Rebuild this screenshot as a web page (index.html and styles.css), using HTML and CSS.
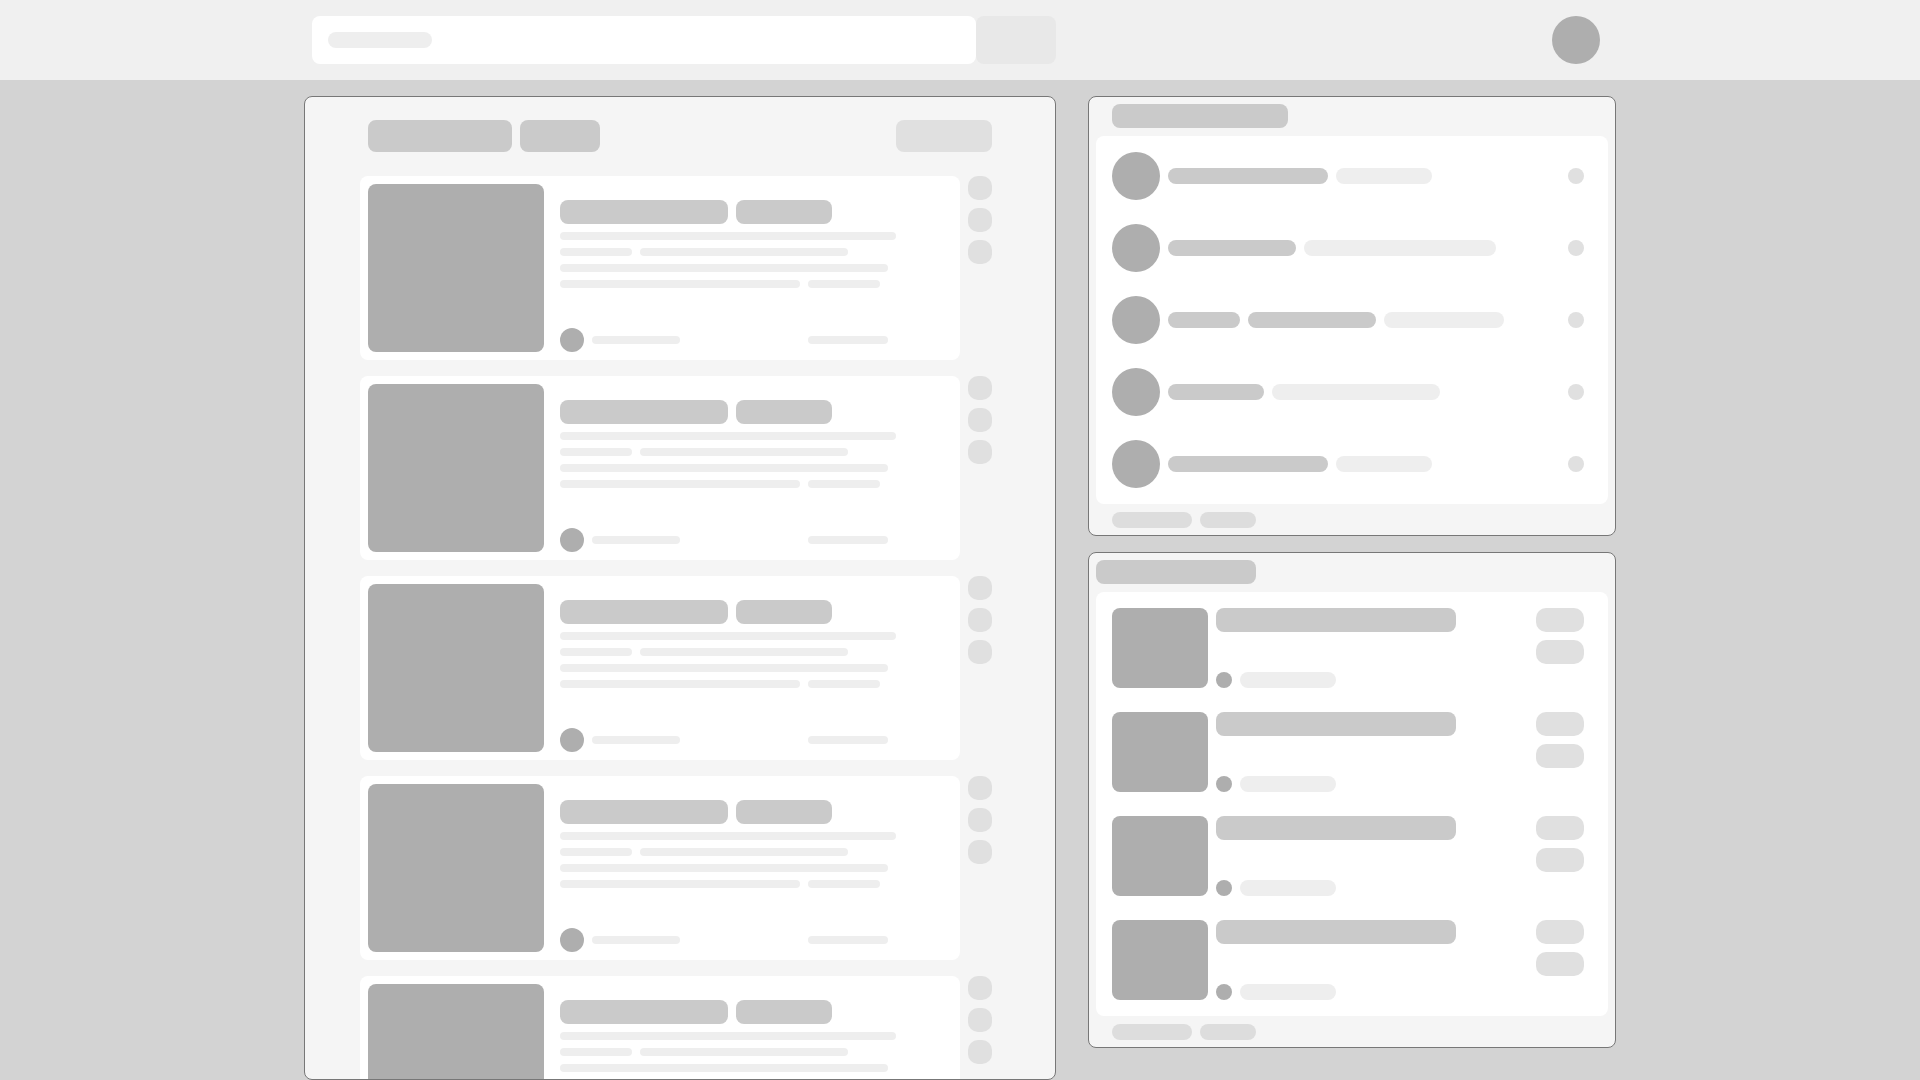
FILE: index.html
```html
<!DOCTYPE html>
<html lang="en">

<head>
    <meta charset="UTF-8">
    <meta name="viewport" content="width=device-width, initial-scale=1.0">
    <title>Document</title>
    <link rel="stylesheet" href="styles.css">
</head>

<body>
    <div class="topbar">
        <div class="topbar-inner">
            <div class="search">
                <span class="search-ph"></span>
            </div>
            <div class="search-btn"></div>
            <div class="avatar"></div>
        </div>
    </div>

    <div class="page">
        <!-- 左边：列表 -->
        <div class="feed">
            <div class="feed-head">
                <span class="pill w144"></span>
                <span class="pill w80"></span>
                <span class="pill light w96 push"></span>
            </div>

            <div class="feed-item">
                <div class="card">
                    <div class="thumb"></div>
                    <div class="info">
                        <div class="tags"><span class="tag w168"></span><span class="tag w96"></span></div>
                        <div class="line"><span class="w336"></span></div>
                        <div class="line"><span class="w72"></span><span class="w208"></span></div>
                        <div class="line"><span class="w328"></span></div>
                        <div class="line"><span class="w240"></span><span class="w72"></span></div>
                        <div class="info-foot">
                            <span class="dot"></span><span class="meta w88"></span>
                            <span class="meta w80 push"></span>
                        </div>
                    </div>
                </div>
                <div class="actions"><span></span><span></span><span></span></div>
            </div>

            <div class="feed-item">
                <div class="card">
                    <div class="thumb"></div>
                    <div class="info">
                        <div class="tags"><span class="tag w168"></span><span class="tag w96"></span></div>
                        <div class="line"><span class="w336"></span></div>
                        <div class="line"><span class="w72"></span><span class="w208"></span></div>
                        <div class="line"><span class="w328"></span></div>
                        <div class="line"><span class="w240"></span><span class="w72"></span></div>
                        <div class="info-foot">
                            <span class="dot"></span><span class="meta w88"></span>
                            <span class="meta w80 push"></span>
                        </div>
                    </div>
                </div>
                <div class="actions"><span></span><span></span><span></span></div>
            </div>

            <div class="feed-item">
                <div class="card">
                    <div class="thumb"></div>
                    <div class="info">
                        <div class="tags"><span class="tag w168"></span><span class="tag w96"></span></div>
                        <div class="line"><span class="w336"></span></div>
                        <div class="line"><span class="w72"></span><span class="w208"></span></div>
                        <div class="line"><span class="w328"></span></div>
                        <div class="line"><span class="w240"></span><span class="w72"></span></div>
                        <div class="info-foot">
                            <span class="dot"></span><span class="meta w88"></span>
                            <span class="meta w80 push"></span>
                        </div>
                    </div>
                </div>
                <div class="actions"><span></span><span></span><span></span></div>
            </div>

            <div class="feed-item">
                <div class="card">
                    <div class="thumb"></div>
                    <div class="info">
                        <div class="tags"><span class="tag w168"></span><span class="tag w96"></span></div>
                        <div class="line"><span class="w336"></span></div>
                        <div class="line"><span class="w72"></span><span class="w208"></span></div>
                        <div class="line"><span class="w328"></span></div>
                        <div class="line"><span class="w240"></span><span class="w72"></span></div>
                        <div class="info-foot">
                            <span class="dot"></span><span class="meta w88"></span>
                            <span class="meta w80 push"></span>
                        </div>
                    </div>
                </div>
                <div class="actions"><span></span><span></span><span></span></div>
            </div>

            <div class="feed-item">
                <div class="card">
                    <div class="thumb"></div>
                    <div class="info">
                        <div class="tags"><span class="tag w168"></span><span class="tag w96"></span></div>
                        <div class="line"><span class="w336"></span></div>
                        <div class="line"><span class="w72"></span><span class="w208"></span></div>
                        <div class="line"><span class="w328"></span></div>
                        <div class="line"><span class="w240"></span><span class="w72"></span></div>
                        <div class="info-foot">
                            <span class="dot"></span><span class="meta w88"></span>
                            <span class="meta w80 push"></span>
                        </div>
                    </div>
                </div>
                <div class="actions"><span></span><span></span><span></span></div>
            </div>
        </div>

        <!-- 右边：两个面板 -->
        <div class="side">
            <div class="panel">
                <div class="panel-title indent w176"></div>
                <div class="panel-body people">
                    <div class="person">
                        <span class="face"></span>
                        <span class="bar w160"></span><span class="bar light w96"></span>
                        <span class="status"></span>
                    </div>
                    <div class="person">
                        <span class="face"></span>
                        <span class="bar w128"></span><span class="bar light w192"></span>
                        <span class="status"></span>
                    </div>
                    <div class="person">
                        <span class="face"></span>
                        <span class="bar w72"></span><span class="bar w128"></span><span class="bar light w120"></span>
                        <span class="status"></span>
                    </div>
                    <div class="person">
                        <span class="face"></span>
                        <span class="bar w96"></span><span class="bar light w168"></span>
                        <span class="status"></span>
                    </div>
                    <div class="person">
                        <span class="face"></span>
                        <span class="bar w160"></span><span class="bar light w96"></span>
                        <span class="status"></span>
                    </div>
                </div>
                <div class="panel-foot"><span class="w80"></span><span class="w56"></span></div>
            </div>

            <div class="panel">
                <div class="panel-title w160"></div>
                <div class="panel-body posts">
                    <div class="post">
                        <div class="post-img"></div>
                        <div class="post-info">
                            <span class="post-title"></span>
                            <div class="post-foot"><span class="small-dot"></span><span class="bar light w96"></span></div>
                        </div>
                        <div class="post-btns"><span></span><span></span></div>
                    </div>
                    <div class="post">
                        <div class="post-img"></div>
                        <div class="post-info">
                            <span class="post-title"></span>
                            <div class="post-foot"><span class="small-dot"></span><span class="bar light w96"></span></div>
                        </div>
                        <div class="post-btns"><span></span><span></span></div>
                    </div>
                    <div class="post">
                        <div class="post-img"></div>
                        <div class="post-info">
                            <span class="post-title"></span>
                            <div class="post-foot"><span class="small-dot"></span><span class="bar light w96"></span></div>
                        </div>
                        <div class="post-btns"><span></span><span></span></div>
                    </div>
                    <div class="post">
                        <div class="post-img"></div>
                        <div class="post-info">
                            <span class="post-title"></span>
                            <div class="post-foot"><span class="small-dot"></span><span class="bar light w96"></span></div>
                        </div>
                        <div class="post-btns"><span></span><span></span></div>
                    </div>
                </div>
                <div class="panel-foot"><span class="w80"></span><span class="w56"></span></div>
            </div>
        </div>
    </div>
</body>

</html>
```

FILE: styles.css
```css
html,
body {
    width: 100%;
    height: 100%;
    margin: 0;
    padding: 0;
}

body {
    background-color: #d3d3d3;
    font-family: "Liberation Sans", Arial, sans-serif;
    overflow: hidden;
}

span {
    display: block;
}

/* 宽度工具类 */
.w56 { width: 56px; }
.w72 { width: 72px; }
.w80 { width: 80px; }
.w88 { width: 88px; }
.w96 { width: 96px; }
.w120 { width: 120px; }
.w128 { width: 128px; }
.w144 { width: 144px; }
.w160 { width: 160px; }
.w168 { width: 168px; }
.w176 { width: 176px; }
.w192 { width: 192px; }
.w208 { width: 208px; }
.w240 { width: 240px; }
.w328 { width: 328px; }
.w336 { width: 336px; }

.push {
    margin-left: auto;
}

/* 顶部 */
.topbar {
    height: 80px;
    background-color: #f0f0f0;
}

.topbar-inner {
    width: 1312px;
    height: 100%;
    margin: 0 auto;
    padding: 0 16px 0 8px;
    box-sizing: border-box;
    display: flex;
    align-items: center;
}

.search {
    width: 664px;
    height: 48px;
    padding-left: 16px;
    box-sizing: border-box;
    background-color: #fff;
    border-radius: 8px;
    display: flex;
    align-items: center;
}

.search-ph {
    width: 104px;
    height: 16px;
    border-radius: 8px;
    background-color: #eeeeee;
}

.search-btn {
    width: 80px;
    height: 48px;
    border-radius: 8px;
    background-color: #e8e8e8;
}

.avatar {
    width: 48px;
    height: 48px;
    margin-left: auto;
    border-radius: 50%;
    background-color: #aeaeae;
}

/* 主体 */
.page {
    width: 1312px;
    margin: 0 auto;
    padding-top: 16px;
    display: flex;
    gap: 32px;
    align-items: flex-start;
}

.feed {
    width: 752px;
    height: calc(100vh - 96px);
    padding: 23px 63px 0 55px;
    box-sizing: border-box;
    overflow: hidden;
    background-color: #f5f5f5;
    border: 1px solid #777;
    border-radius: 8px;
}

.feed-head {
    height: 32px;
    margin: 0 0 24px 8px;
    display: flex;
    gap: 8px;
}

.pill {
    height: 32px;
    border-radius: 8px;
    background-color: #cacaca;
}

.pill.light {
    background-color: #e0e0e0;
}

.feed-item {
    display: flex;
    gap: 8px;
    margin-bottom: 16px;
}

.card {
    width: 600px;
    padding: 8px;
    box-sizing: border-box;
    background-color: #fff;
    border-radius: 8px;
    display: flex;
    gap: 16px;
}

.thumb {
    width: 176px;
    height: 168px;
    flex-shrink: 0;
    border-radius: 8px;
    background-color: #aeaeae;
}

.info {
    width: 336px;
    padding-top: 16px;
    display: flex;
    flex-direction: column;
}

.tags {
    display: flex;
    gap: 8px;
    margin-bottom: 8px;
}

.tag {
    height: 24px;
    border-radius: 8px;
    background-color: #cacaca;
}

.line {
    display: flex;
    gap: 8px;
    margin-bottom: 8px;
}

.line span {
    height: 8px;
    border-radius: 4px;
    background-color: #eeeeee;
}

.info-foot {
    margin-top: auto;
    padding-right: 8px;
    display: flex;
    align-items: center;
    gap: 8px;
}

.dot {
    width: 24px;
    height: 24px;
    border-radius: 50%;
    background-color: #aeaeae;
}

.meta {
    height: 8px;
    border-radius: 4px;
    background-color: #eeeeee;
}

.actions {
    display: flex;
    flex-direction: column;
    gap: 8px;
}

.actions span {
    width: 24px;
    height: 24px;
    border-radius: 10px;
    background-color: #e0e0e0;
}

/* 右边 */
.side {
    width: 528px;
    display: flex;
    flex-direction: column;
    gap: 16px;
}

.panel {
    padding: 7px;
    background-color: #f5f5f5;
    border: 1px solid #777;
    border-radius: 8px;
}

.panel-title {
    height: 24px;
    border-radius: 8px;
    background-color: #cacaca;
}

.panel-title.indent {
    margin-left: 16px;
}

.panel-body {
    margin: 8px 0;
    padding: 16px 24px 16px 16px;
    background-color: #fff;
    border-radius: 8px;
    display: flex;
    flex-direction: column;
    gap: 24px;
}

.person {
    height: 48px;
    display: flex;
    align-items: center;
    gap: 8px;
}

.face {
    width: 48px;
    height: 48px;
    border-radius: 50%;
    background-color: #aeaeae;
}

.bar {
    height: 16px;
    border-radius: 8px;
    background-color: #cacaca;
}

.bar.light {
    background-color: #eeeeee;
}

.status {
    width: 16px;
    height: 16px;
    margin-left: auto;
    border-radius: 50%;
    background-color: #e0e0e0;
}

.post {
    height: 80px;
    display: flex;
    gap: 8px;
}

.post-img {
    width: 96px;
    height: 80px;
    border-radius: 8px;
    background-color: #aeaeae;
}

.post-info {
    display: flex;
    flex-direction: column;
    justify-content: space-between;
}

.post-title {
    width: 240px;
    height: 24px;
    border-radius: 8px;
    background-color: #cacaca;
}

.post-foot {
    display: flex;
    gap: 8px;
}

.small-dot {
    width: 16px;
    height: 16px;
    border-radius: 50%;
    background-color: #aeaeae;
}

.post-btns {
    margin-left: auto;
    display: flex;
    flex-direction: column;
    gap: 8px;
}

.post-btns span {
    width: 48px;
    height: 24px;
    border-radius: 10px;
    background-color: #e0e0e0;
}

.panel-foot {
    margin-left: 16px;
    display: flex;
    gap: 8px;
}

.panel-foot span {
    height: 16px;
    border-radius: 8px;
    background-color: #dddddd;
}
```
